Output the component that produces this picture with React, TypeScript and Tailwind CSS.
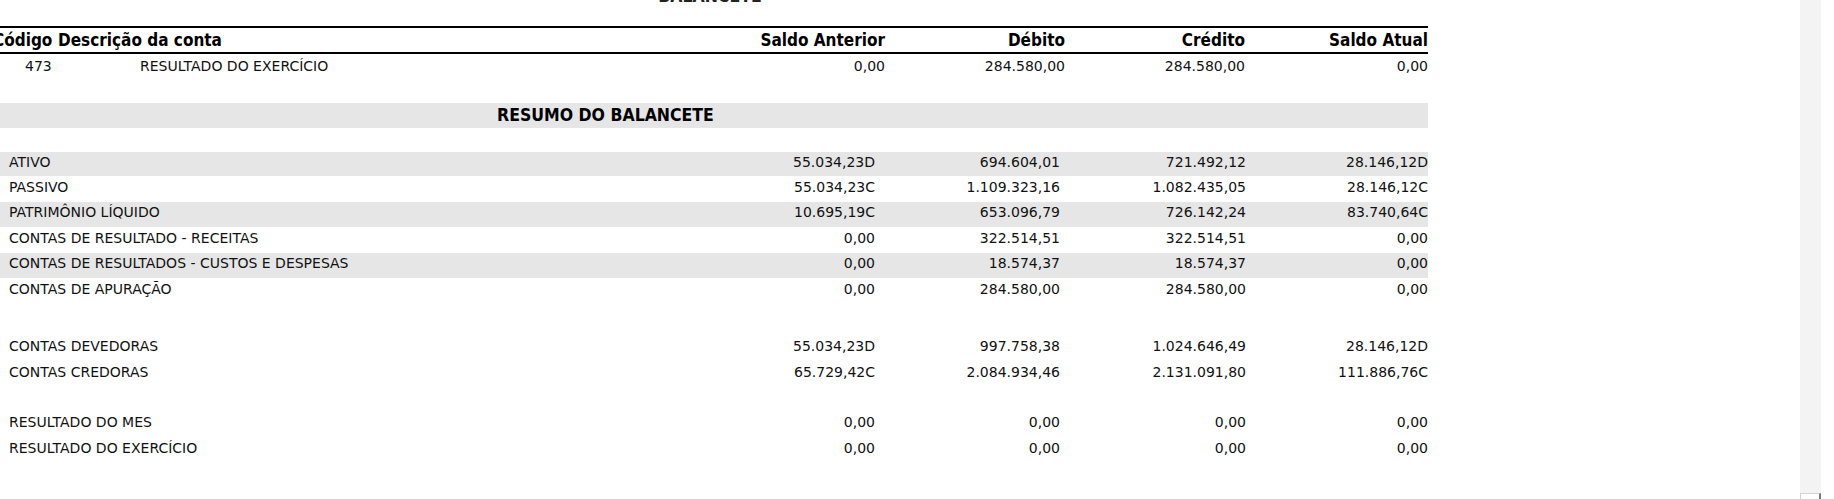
import React from "react";

type Linha = { conta: string; anterior: string; debito: string; credito: string; atual: string; cinza?: boolean };

const resumo: Linha[] = [
  { conta: "ATIVO", anterior: "55.034,23D", debito: "694.604,01", credito: "721.492,12", atual: "28.146,12D", cinza: true },
  { conta: "PASSIVO", anterior: "55.034,23C", debito: "1.109.323,16", credito: "1.082.435,05", atual: "28.146,12C" },
  { conta: "PATRIMÔNIO LÍQUIDO", anterior: "10.695,19C", debito: "653.096,79", credito: "726.142,24", atual: "83.740,64C", cinza: true },
  { conta: "CONTAS DE RESULTADO - RECEITAS", anterior: "0,00", debito: "322.514,51", credito: "322.514,51", atual: "0,00" },
  { conta: "CONTAS DE RESULTADOS - CUSTOS E DESPESAS", anterior: "0,00", debito: "18.574,37", credito: "18.574,37", atual: "0,00", cinza: true },
  { conta: "CONTAS DE APURAÇÃO", anterior: "0,00", debito: "284.580,00", credito: "284.580,00", atual: "0,00" },
];

const totais: Linha[] = [
  { conta: "CONTAS DEVEDORAS", anterior: "55.034,23D", debito: "997.758,38", credito: "1.024.646,49", atual: "28.146,12D" },
  { conta: "CONTAS CREDORAS", anterior: "65.729,42C", debito: "2.084.934,46", credito: "2.131.091,80", atual: "111.886,76C" },
];

const resultados: Linha[] = [
  { conta: "RESULTADO DO MES", anterior: "0,00", debito: "0,00", credito: "0,00", atual: "0,00" },
  { conta: "RESULTADO DO EXERCÍCIO", anterior: "0,00", debito: "0,00", credito: "0,00", atual: "0,00" },
];

const bold = "font-['DejaVu_Sans_Condensed','DejaVu_Sans',sans-serif] font-bold";

function LinhaResumo({ l }: { l: Linha }) {
  return (
    <div
      className={`grid h-[24.4px] grid-cols-[703px_180px_185px_186px_182px] leading-[21px] ${
        l.cinza ? "bg-[#e6e6e6]" : ""
      }`}
    >
      <div className="pl-[17px]">{l.conta}</div>
      <div className="text-right">{l.anterior}</div>
      <div className="text-right">{l.debito}</div>
      <div className="text-right">{l.credito}</div>
      <div className="text-right">{l.atual}</div>
    </div>
  );
}

function Grupo({ linhas, className }: { linhas: Linha[]; className: string }) {
  return (
    <div className={`flex flex-col gap-[1px] ${className}`}>
      {linhas.map((l) => (
        <LinhaResumo key={l.conta} l={l} />
      ))}
    </div>
  );
}

export default function App() {
  return (
    <div className="flex h-[499px] w-[1834px] overflow-hidden bg-white font-['DejaVu_Sans',sans-serif] text-[14px] text-[#111]">
      <div className="w-[1800px] overflow-hidden">
        <div className="ml-[-8px] w-[1436px]">
          <div className={`mt-[-14px] h-[20px] text-center text-[17.5px] leading-[20px] text-[#222] ${bold}`}>
            BALANCETE
          </div>

          <div
            className={`mt-[20px] grid h-[28px] grid-cols-[62px_651px_180px_180px_180px_183px] border-y-2 border-black pt-[1px] text-[17px] leading-[23px] text-black ${bold}`}
          >
            <div className="pl-[1px]">Código</div>
            <div className="pl-[4px]">Descrição da conta</div>
            <div className="text-right">Saldo Anterior</div>
            <div className="text-right">Débito</div>
            <div className="text-right">Crédito</div>
            <div className="text-right">Saldo Atual</div>
          </div>

          <div className="mt-[2px] grid h-[24.4px] grid-cols-[62px_651px_180px_180px_180px_183px] leading-[21px]">
            <div className="pl-[33px]">473</div>
            <div className="pl-[86px]">RESULTADO DO EXERCÍCIO</div>
            <div className="text-right">0,00</div>
            <div className="text-right">284.580,00</div>
            <div className="text-right">284.580,00</div>
            <div className="text-right">0,00</div>
          </div>

          <div className={`mt-[22.6px] h-[25px] bg-[#e6e6e6] pl-[505px] text-[17.5px] leading-[25px] text-black ${bold}`}>
            RESUMO DO BALANCETE
          </div>

          <Grupo linhas={resumo} className="mt-[23.7px]" />
          <Grupo linhas={totais} className="mt-[33.1px]" />
          <Grupo linhas={resultados} className="mt-[26.4px]" />
        </div>
      </div>

      {/* barra de rolagem */}
      <div className="flex w-[21px] flex-col justify-end bg-[#f3f3f3]">
        <div className="h-[6px] border-t border-l border-r-2 border-[#d4d4d4] border-r-[#777] bg-white" />
      </div>
      <div className="flex-1 bg-white" />
    </div>
  );
}
